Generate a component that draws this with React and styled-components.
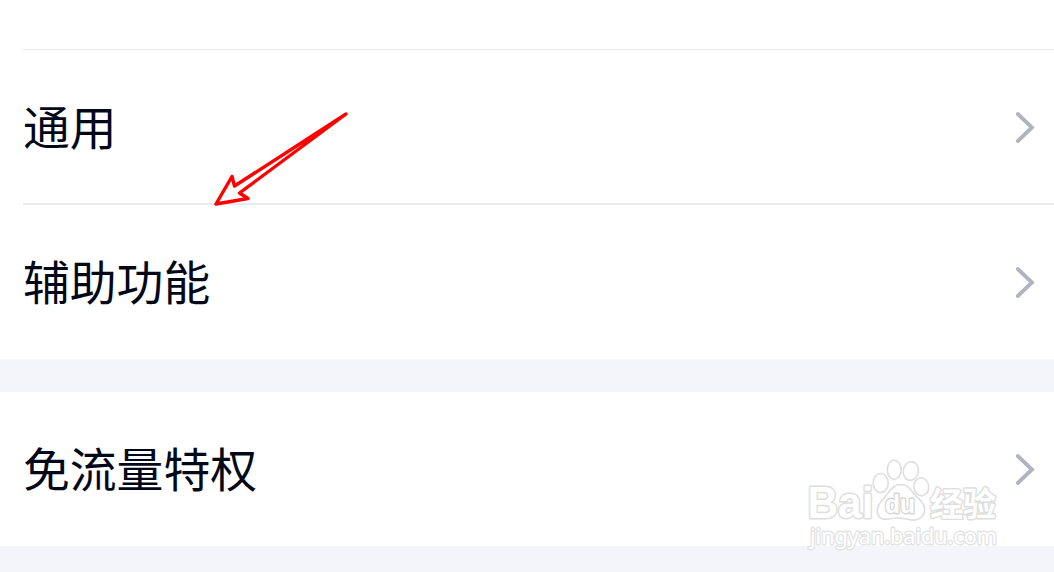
import React from "react";
import styled, { createGlobalStyle } from "styled-components";

const GlobalStyle = createGlobalStyle`
  * { box-sizing: border-box; }
  html, body { margin: 0; background: #f4f5fa; overflow: hidden; }
`;

const Screen = styled.main`
  position: relative;
  width: 1054px;
  height: 572px;
  overflow: hidden;
  background: #f4f5fa;
  font-family: "Noto Sans CJK SC", sans-serif;
`;

const Group = styled.section`
  background: #fff;
  padding-top: ${(p) => p.$lead || 0}px;
  margin-bottom: 33px;
`;

const Divider = styled.hr`
  height: ${(p) => p.$thickness}px;
  margin: 0 0 0 23px;
  border: 0;
  background: ${(p) => p.$color};
`;

const Row = styled.div`
  display: flex;
  align-items: center;
  justify-content: space-between;
  height: ${(p) => p.$height}px;
  padding: 0 19px 0 23px;
`;

const Label = styled.span`
  padding-bottom: 4px;
  color: #030819;
  font-size: 46.8px;
  line-height: 70px;
  white-space: nowrap;
`;

const Chevron = styled.svg`
  width: 20px;
  height: 32px;
  fill: none;
  stroke: #b1b3c1;
  stroke-width: 3.8;
  stroke-linecap: round;
`;

const Arrow = styled.svg`
  position: absolute;
  left: 205px;
  top: 105px;
  width: 150px;
  height: 110px;
  fill: none;
  stroke: #ff0000;
  stroke-width: 3.4;
  stroke-linejoin: round;
`;

const Watermark = styled.svg`
  position: absolute;
  left: 800px;
  top: 450px;
  width: 210px;
  height: 110px;
  fill: #fff;
  stroke: #dedede;
  stroke-width: 1.6;
  stroke-linejoin: round;
`;

const Mark = styled.text`
  font-family: ${(p) => p.$family};
  font-size: ${(p) => p.$size}px;
  font-weight: ${(p) => p.$weight};
  stroke: ${(p) => p.$edge || "#dedede"};
  stroke-width: ${(p) => p.$outline};
  paint-order: stroke;
`;

const latin = '"Liberation Sans", sans-serif';
const humanist = '"Noto Sans", sans-serif';
const chinese = '"Noto Sans CJK SC", sans-serif';

function SettingRow({ label, height = 154 }) {
  return (
    <Row $height={height}>
      <Label>{label}</Label>
      <Chevron viewBox="0 0 20 32">
        <path d="M2.8 3 17 16.500 2.8 30" />
      </Chevron>
    </Row>
  );
}

export default function App() {
  return (
    <>
      <GlobalStyle />
      <Screen>
        <Group $lead={49}>
          <Divider $thickness={1} $color="#e9eaed" />
          <SettingRow label="通用" height={153} />
          <Divider $thickness={2} $color="#e8ecf2" />
          <SettingRow label="辅助功能" />
        </Group>
        <Group>
          <SettingRow label="免流量特权" />
        </Group>
        <Arrow viewBox="205 105 150 110">
          <path d="M346 114 234.500 186 232 176.500 216 204 248 198.500 239.500 193Z" />
        </Arrow>
        <Watermark viewBox="800 450 210 110">
          <Mark x="807.5" y="518" textLength="66" lengthAdjust="spacingAndGlyphs" $family={latin} $size={43.5} $weight={700} $outline={3}>Bai</Mark>
          <ellipse cx="880.7" cy="483" rx="7.5" ry="9.5" />
          <ellipse cx="894.2" cy="469.7" rx="6.9" ry="9.7" />
          <ellipse cx="910.8" cy="471" rx="7.5" ry="9.3" transform="rotate(12 910.8 471)" />
          <ellipse cx="921.3" cy="486.8" rx="7.4" ry="9" transform="rotate(-8 921.3 486.800)" />
          <path d="M900.500 484.500C893 484.500 890 491 885 497C880 502 876 507 877.500 513C879.500 521 887 519.500 892 518.500C898 517.500 904 518 909 519.500C917 521.500 923.500 518 924.500 511C925.500 503 919 499.500 915 495C910 489 908 484.500 900.500 484.500Z" />
          <Mark x="885" y="513" textLength="30" lengthAdjust="spacingAndGlyphs" $family={latin} $size={26} $weight={700} $outline={2.8} $edge="#d6d6d6">du</Mark>
          <Mark x="930" y="516" textLength="66" lengthAdjust="spacingAndGlyphs" $family={chinese} $size={33} $weight={700} $outline={2.8}>经验</Mark>
          <Mark x="810" y="543.5" textLength="187" lengthAdjust="spacingAndGlyphs" $family={humanist} $size={22} $weight={400} $outline={2.8} $edge="#e4e4e4">jingyan.baidu.com</Mark>
        </Watermark>
      </Screen>
    </>
  );
}
